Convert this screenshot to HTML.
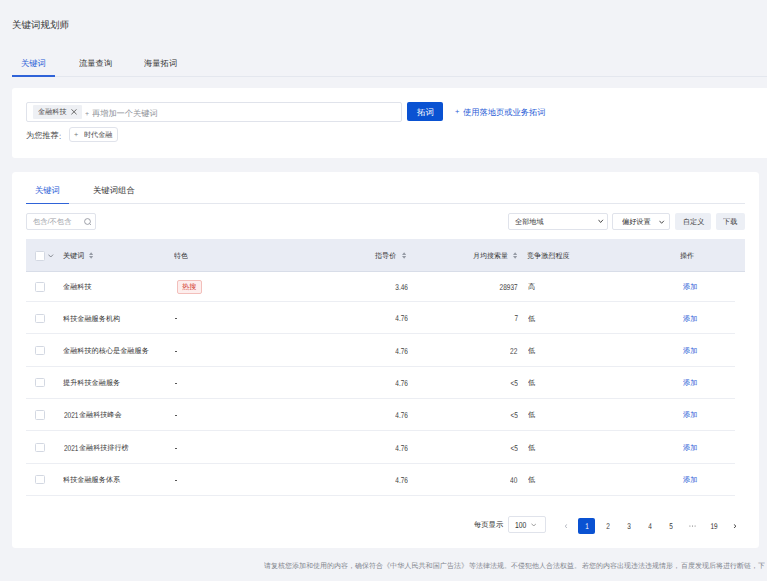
<!DOCTYPE html>
<html><head><meta charset="utf-8">
<style>
*{margin:0;padding:0;box-sizing:border-box;}
html,body{width:767px;height:581px;overflow:hidden;background:#f2f3f7;font-family:"Liberation Sans",sans-serif;color:#333;position:relative;}
.a{position:absolute;}
.t{position:absolute;white-space:nowrap;line-height:20px;height:20px;font-size:20px;transform-origin:0 0;text-rendering:geometricPrecision;}
.tr{transform-origin:100% 0;}
.tc{width:100px;text-align:center;transform-origin:50% 0;}
</style></head>
<body>
<div class="t" style="left:11.62px;top:20.45px;transform:scale(0.4750,0.4750);color:#333;">关键词规划师</div>
<div class="t" style="left:20.89px;top:58.85px;transform:scale(0.4150,0.4150);color:#1f5bd6;">关键词</div>
<div class="t" style="left:79.08px;top:58.85px;transform:scale(0.4150,0.4150);color:#333333;">流量查询</div>
<div class="t" style="left:144.49px;top:58.85px;transform:scale(0.4150,0.4150);color:#333333;">海量拓词</div>
<div class="a" style="left:12px;top:76px;width:755.00px;height:1.00px;background:#e4e7ee;"></div>
<div class="a" style="left:12px;top:74.5px;width:43.00px;height:2.00px;background:#2f63d8;"></div>
<div class="a" style="left:12px;top:88px;width:768.00px;height:70.00px;background:#fff;border-radius:3px;"></div>
<div class="a" style="left:26px;top:102px;width:376.00px;height:20.00px;border:1px solid #e0e3eb;border-radius:2px;"></div>
<div class="a" style="left:33.2px;top:105px;width:48.50px;height:13.80px;background:#eef0f4;border-radius:1px;"></div>
<div class="t" style="left:37.54px;top:108.42px;transform:scale(0.3575,0.3575);color:#4a4a4a;">金融科技</div>
<svg class="a" style="left:71px;top:108.8px" width="6" height="6" viewBox="0 0 6 6"><path d="M0.4 0.3L5.6 5.3M5.6 0.3L0.4 5.3" stroke="#6a6a6a" stroke-width="1"/></svg>
<div class="t" style="left:84.95px;top:110.30px;transform:scale(0.3500,0.3500);color:#8e9198;">+</div>
<div class="t" style="left:91.79px;top:108.70px;transform:scale(0.4100,0.4100);color:#8e9198;">再增加一个关键词</div>
<div class="a" style="left:407px;top:102px;width:36.00px;height:18.70px;background:#0a52d2;border-radius:2px;"></div>
<div class="t" style="left:416.58px;top:107.78px;transform:scale(0.4225,0.4225);color:#fff;">拓词</div>
<div class="t" style="left:455.22px;top:108.20px;transform:scale(0.3800,0.3800);color:#1f5bd6;">+</div>
<div class="t" style="left:462.89px;top:107.67px;transform:scale(0.4130,0.4130);color:#1f5bd6;">使用落地页或业务拓词</div>
<div class="t" style="left:25.79px;top:131.24px;transform:scale(0.4065,0.4065);color:#4a4a4a;">为您推荐</div>
<div class="t" style="left:58.79px;top:131.53px;transform:scale(0.4065,0.4065);color:#4a4a4a;">:</div>
<div class="a" style="left:69px;top:127px;width:49.00px;height:14.60px;border:1px solid #e0e3eb;border-radius:3px;"></div>
<div class="t" style="left:74.44px;top:131.00px;transform:scale(0.3600,0.3600);color:#777;">+</div>
<div class="t" style="left:84.14px;top:131.05px;transform:scale(0.3550,0.3550);color:#4a4a4a;">时代金融</div>
<div class="a" style="left:12px;top:172px;width:747.20px;height:375.50px;background:#fff;border-radius:3.5px;"></div>
<div class="t" style="left:34.79px;top:186.45px;transform:scale(0.4150,0.4150);color:#1f5bd6;">关键词</div>
<div class="t" style="left:92.78px;top:186.42px;transform:scale(0.4175,0.4175);color:#333333;">关键词组合</div>
<div class="a" style="left:26px;top:203px;width:719.40px;height:1.00px;background:#e4e7ee;"></div>
<div class="a" style="left:26px;top:202.5px;width:43.40px;height:1.80px;background:#2f63d8;"></div>
<div class="a" style="left:26px;top:213px;width:70.00px;height:17.00px;border:1px solid #e0e3eb;border-radius:2px;"></div>
<div class="t" style="left:32.94px;top:218.06px;transform:scale(0.3640,0.3640);color:#9ea1a9;">包含/不包含</div>
<svg class="a" style="left:83.7px;top:217.6px" width="8" height="8" viewBox="0 0 8 8"><circle cx="3.5" cy="3.5" r="2.9" fill="none" stroke="#8b8f98" stroke-width="0.85"/><path d="M5.7 5.7L6.9 6.9" stroke="#8b8f98" stroke-width="0.85"/></svg>
<div class="a" style="left:508px;top:213px;width:100.00px;height:17.00px;border:1px solid #e0e3eb;border-radius:2px;"></div>
<div class="t" style="left:515.24px;top:218.43px;transform:scale(0.3575,0.3575);color:#333333;">全部地域</div>
<svg class="a" style="left:597.8px;top:218.8px" width="6" height="4.5" viewBox="0 0 6 4.5"><path d="M0.5 0.8L2.6 3.5L5 0.8" fill="none" stroke="#404040" stroke-width="0.9"/></svg>
<div class="a" style="left:612px;top:213px;width:58.00px;height:17.00px;border:1px solid #e0e3eb;border-radius:2px;"></div>
<div class="t" style="left:622.24px;top:218.43px;transform:scale(0.3575,0.3575);color:#333333;">偏好设置</div>
<svg class="a" style="left:658.7px;top:219.5px" width="6" height="4.5" viewBox="0 0 6 4.5"><path d="M0.5 0.8L2.6 3.3L4.9 0.8" fill="none" stroke="#404040" stroke-width="0.9"/></svg>
<div class="a" style="left:675px;top:213px;width:36.00px;height:17.00px;background:#eceff5;border-radius:2px;"></div>
<div class="t" style="left:682.50px;top:218.45px;transform:scale(0.3550,0.3550);color:#333333;">自定义</div>
<div class="a" style="left:716px;top:213px;width:29.20px;height:17.00px;background:#eceff5;border-radius:2px;"></div>
<div class="t" style="left:723.14px;top:218.43px;transform:scale(0.3575,0.3575);color:#333333;">下载</div>
<div class="a" style="left:26px;top:239px;width:719.00px;height:32.80px;background:#e9ecf4;border-bottom:1px solid #d8dde8;"></div>
<div class="a" style="left:35.2px;top:251.3px;width:9.60px;height:9.40px;background:#fff;border:1px solid #d3d8e2;border-radius:1.5px;"></div>
<svg class="a" style="left:48px;top:253.6px" width="5.5" height="4" viewBox="0 0 5.5 4"><path d="M0.4 0.6L2.75 3L5.1 0.6" fill="none" stroke="#6f737c" stroke-width="0.8"/></svg>
<div class="t" style="left:63.15px;top:252.15px;transform:scale(0.3550,0.3550);color:#333333;">关键词</div>
<svg class="a" style="left:88.9px;top:252px" width="4.3" height="7" viewBox="0 0 4.3 7"><path d="M2.15 0.3L4.3 3H0Z M2.15 6.7L4.3 4H0Z" fill="#969ba5"/></svg>
<div class="t" style="left:174.25px;top:252.22px;transform:scale(0.3475,0.3475);color:#333333;">特色</div>
<div class="t" style="left:375.25px;top:252.15px;transform:scale(0.3550,0.3550);color:#333333;">指导价</div>
<svg class="a" style="left:401.7px;top:252px" width="4.3" height="7" viewBox="0 0 4.3 7"><path d="M2.15 0.3L4.3 3H0Z M2.15 6.7L4.3 4H0Z" fill="#969ba5"/></svg>
<div class="t" style="left:472.95px;top:252.20px;transform:scale(0.3500,0.3500);color:#333333;">月均搜索量</div>
<svg class="a" style="left:512.7px;top:252px" width="4.3" height="7" viewBox="0 0 4.3 7"><path d="M2.15 0.3L4.3 3H0Z M2.15 6.7L4.3 4H0Z" fill="#969ba5"/></svg>
<div class="t" style="left:527.04px;top:252.15px;transform:scale(0.3550,0.3550);color:#333333;">竞争激烈程度</div>
<div class="t" style="left:679.94px;top:252.15px;transform:scale(0.3550,0.3550);color:#333333;">操作</div>
<div class="a" style="left:35.2px;top:282.3px;width:9.60px;height:9.40px;background:#fff;border:1px solid #d3d8e2;border-radius:1.5px;"></div>
<div class="t" style="left:62.64px;top:283.43px;transform:scale(0.3575,0.3575);color:#333333;">金融科技</div>
<div class="a" style="left:177px;top:279.5px;width:24.70px;height:14.20px;background:#fdeeed;border:1px solid #f3bfbb;border-radius:2px;"></div>
<div class="t" style="left:181.94px;top:283.32px;transform:scale(0.3575,0.3575);color:#d23a2f;">热搜</div>
<div class="t tr" style="right:359.40px;top:283.12px;transform:scale(0.3253,0.4183);color:#3a3a3a;">3.46</div>
<div class="t tr" style="right:249.30px;top:283.12px;transform:scale(0.3253,0.4183);color:#3a3a3a;">28937</div>
<div class="t" style="left:527.64px;top:283.43px;transform:scale(0.3575,0.3575);color:#333333;">高</div>
<div class="t" style="left:682.94px;top:283.43px;transform:scale(0.3575,0.3575);color:#1f5bd6;">添加</div>
<div class="a" style="left:26px;top:301px;width:709.20px;height:1.00px;background:#eceef3;"></div>
<div class="a" style="left:35.2px;top:313.6px;width:9.60px;height:9.40px;background:#fff;border:1px solid #d3d8e2;border-radius:1.5px;"></div>
<div class="t" style="left:62.64px;top:314.73px;transform:scale(0.3575,0.3575);color:#333333;">科技金融服务机构</div>
<div class="a" style="left:174.8px;top:318px;width:2.50px;height:1.00px;background:#555;"></div>
<div class="t tr" style="right:359.40px;top:314.42px;transform:scale(0.3253,0.4183);color:#3a3a3a;">4.76</div>
<div class="t tr" style="right:249.30px;top:314.42px;transform:scale(0.3253,0.4183);color:#3a3a3a;">7</div>
<div class="t" style="left:527.64px;top:314.73px;transform:scale(0.3575,0.3575);color:#333333;">低</div>
<div class="t" style="left:682.94px;top:314.73px;transform:scale(0.3575,0.3575);color:#1f5bd6;">添加</div>
<div class="a" style="left:26px;top:333px;width:709.20px;height:1.00px;background:#eceef3;"></div>
<div class="a" style="left:35.2px;top:346.1px;width:9.60px;height:9.40px;background:#fff;border:1px solid #d3d8e2;border-radius:1.5px;"></div>
<div class="t" style="left:62.64px;top:347.23px;transform:scale(0.3575,0.3575);color:#333333;">金融科技的核心是金融服务</div>
<div class="a" style="left:174.8px;top:351px;width:2.50px;height:1.00px;background:#555;"></div>
<div class="t tr" style="right:359.40px;top:346.92px;transform:scale(0.3253,0.4183);color:#3a3a3a;">4.76</div>
<div class="t tr" style="right:249.30px;top:346.92px;transform:scale(0.3253,0.4183);color:#3a3a3a;">22</div>
<div class="t" style="left:527.64px;top:347.23px;transform:scale(0.3575,0.3575);color:#333333;">低</div>
<div class="t" style="left:682.94px;top:347.23px;transform:scale(0.3575,0.3575);color:#1f5bd6;">添加</div>
<div class="a" style="left:26px;top:366px;width:709.20px;height:1.00px;background:#eceef3;"></div>
<div class="a" style="left:35.2px;top:378.1px;width:9.60px;height:9.40px;background:#fff;border:1px solid #d3d8e2;border-radius:1.5px;"></div>
<div class="t" style="left:62.64px;top:379.23px;transform:scale(0.3575,0.3575);color:#333333;">提升科技金融服务</div>
<div class="a" style="left:174.8px;top:383px;width:2.50px;height:1.00px;background:#555;"></div>
<div class="t tr" style="right:359.40px;top:378.92px;transform:scale(0.3253,0.4183);color:#3a3a3a;">4.76</div>
<div class="t tr" style="right:249.30px;top:378.92px;transform:scale(0.3253,0.4183);color:#3a3a3a;">&lt;5</div>
<div class="t" style="left:527.64px;top:379.23px;transform:scale(0.3575,0.3575);color:#333333;">低</div>
<div class="t" style="left:682.94px;top:379.23px;transform:scale(0.3575,0.3575);color:#1f5bd6;">添加</div>
<div class="a" style="left:26px;top:398px;width:709.20px;height:1.00px;background:#eceef3;"></div>
<div class="a" style="left:35.2px;top:410.3px;width:9.60px;height:9.40px;background:#fff;border:1px solid #d3d8e2;border-radius:1.5px;"></div>
<div class="t" style="left:63.67px;top:410.82px;transform:scale(0.3253,0.4183);color:#333333;">2021</div>
<div class="t" style="left:78.85px;top:411.46px;transform:scale(0.3540,0.3540);color:#333333;">金融科技峰会</div>
<div class="a" style="left:174.8px;top:415px;width:2.50px;height:1.00px;background:#555;"></div>
<div class="t tr" style="right:359.40px;top:411.12px;transform:scale(0.3253,0.4183);color:#3a3a3a;">4.76</div>
<div class="t tr" style="right:249.30px;top:411.12px;transform:scale(0.3253,0.4183);color:#3a3a3a;">&lt;5</div>
<div class="t" style="left:527.64px;top:411.43px;transform:scale(0.3575,0.3575);color:#333333;">低</div>
<div class="t" style="left:682.94px;top:411.43px;transform:scale(0.3575,0.3575);color:#1f5bd6;">添加</div>
<div class="a" style="left:26px;top:430px;width:709.20px;height:1.00px;background:#eceef3;"></div>
<div class="a" style="left:35.2px;top:443.0px;width:9.60px;height:9.40px;background:#fff;border:1px solid #d3d8e2;border-radius:1.5px;"></div>
<div class="t" style="left:63.67px;top:443.52px;transform:scale(0.3253,0.4183);color:#333333;">2021</div>
<div class="t" style="left:78.85px;top:444.16px;transform:scale(0.3540,0.3540);color:#333333;">金融科技排行榜</div>
<div class="a" style="left:174.8px;top:448px;width:2.50px;height:1.00px;background:#555;"></div>
<div class="t tr" style="right:359.40px;top:443.82px;transform:scale(0.3253,0.4183);color:#3a3a3a;">4.76</div>
<div class="t tr" style="right:249.30px;top:443.82px;transform:scale(0.3253,0.4183);color:#3a3a3a;">&lt;5</div>
<div class="t" style="left:527.64px;top:444.12px;transform:scale(0.3575,0.3575);color:#333333;">低</div>
<div class="t" style="left:682.94px;top:444.12px;transform:scale(0.3575,0.3575);color:#1f5bd6;">添加</div>
<div class="a" style="left:26px;top:463px;width:709.20px;height:1.00px;background:#eceef3;"></div>
<div class="a" style="left:35.2px;top:475.1px;width:9.60px;height:9.40px;background:#fff;border:1px solid #d3d8e2;border-radius:1.5px;"></div>
<div class="t" style="left:62.64px;top:476.23px;transform:scale(0.3575,0.3575);color:#333333;">科技金融服务体系</div>
<div class="a" style="left:174.8px;top:480px;width:2.50px;height:1.00px;background:#555;"></div>
<div class="t tr" style="right:359.40px;top:475.92px;transform:scale(0.3253,0.4183);color:#3a3a3a;">4.76</div>
<div class="t tr" style="right:249.30px;top:475.92px;transform:scale(0.3253,0.4183);color:#3a3a3a;">40</div>
<div class="t" style="left:527.64px;top:476.23px;transform:scale(0.3575,0.3575);color:#333333;">低</div>
<div class="t" style="left:682.94px;top:476.23px;transform:scale(0.3575,0.3575);color:#1f5bd6;">添加</div>
<div class="a" style="left:26px;top:495px;width:709.20px;height:1.00px;background:#eceef3;"></div>
<div class="t" style="left:474.24px;top:521.05px;transform:scale(0.3650,0.3650);color:#333333;">每页显示</div>
<div class="a" style="left:508px;top:516px;width:37.50px;height:17.00px;border:1px solid #e0e3eb;border-radius:2px;"></div>
<div class="t" style="left:515.26px;top:520.51px;transform:scale(0.3412,0.4387);color:#333333;">100</div>
<svg class="a" style="left:530.8px;top:522.5px" width="5.5" height="4" viewBox="0 0 5.5 4"><path d="M0.4 0.6L2.75 3L5.1 0.6" fill="none" stroke="#777" stroke-width="0.7"/></svg>
<svg class="a" style="left:563.8px;top:523.6px" width="4" height="4.6" viewBox="0 0 4 4.6"><path d="M3.1 0.4L1 2.2L3.1 4.0" fill="none" stroke="#b3b7bf" stroke-width="0.9"/></svg>
<div class="a" style="left:578.2px;top:517.7px;width:16.80px;height:16.00px;background:#0a52d2;border-radius:2px;"></div>
<div class="t tc" style="left:536.60px;top:522.05px;transform:scale(0.3231,0.4153);color:#fff;">1</div>
<div class="t tc" style="left:557.75px;top:521.85px;transform:scale(0.3231,0.4153);color:#333333;">2</div>
<div class="t tc" style="left:578.75px;top:521.85px;transform:scale(0.3231,0.4153);color:#333333;">3</div>
<div class="t tc" style="left:600.05px;top:521.85px;transform:scale(0.3231,0.4153);color:#333333;">4</div>
<div class="t tc" style="left:621.35px;top:521.85px;transform:scale(0.3231,0.4153);color:#333333;">5</div>
<svg class="a" style="left:689px;top:524.5px" width="7" height="2" viewBox="0 0 7 2"><circle cx="0.9" cy="1" r="0.55" fill="#666"/><circle cx="3.5" cy="1" r="0.55" fill="#666"/><circle cx="6.1" cy="1" r="0.55" fill="#666"/></svg>
<div class="t tc" style="left:663.60px;top:521.85px;transform:scale(0.3231,0.4153);color:#333333;">19</div>
<svg class="a" style="left:732.8px;top:523.6px" width="4" height="4.6" viewBox="0 0 4 4.6"><path d="M0.9 0.4L3 2.2L0.9 4.0" fill="none" stroke="#3a3a3a" stroke-width="0.9"/></svg>
<div class="t" style="left:263.60px;top:561.70px;transform:scale(0.3500,0.3500);color:#80838c;">请复核您添加和使用的内容，确保符合</div>
<div class="t" style="left:382.60px;top:561.65px;transform:scale(0.3550,0.3550);color:#80838c;">《中华人民共和国广告法》</div>
<div class="t" style="left:469.29px;top:561.70px;transform:scale(0.3500,0.3500);color:#80838c;">等法律法规。不侵犯他人合法权益。</div>
<div class="t" style="left:581.60px;top:561.70px;transform:scale(0.3500,0.3500);color:#80838c;">若您的内容出现违法违规情形，</div>
<div class="t" style="left:681.00px;top:561.70px;transform:scale(0.3500,0.3500);color:#80838c;">百度发现后将进行断链，下</div>
</body></html>
